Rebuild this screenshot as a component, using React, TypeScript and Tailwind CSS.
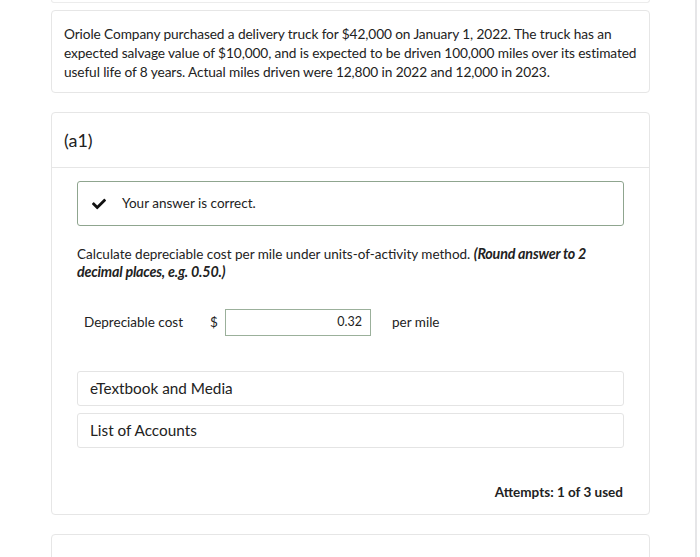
import React from "react";
import { FaCheck } from "react-icons/fa";

export default function App() {
  return (
    <div
      className="relative w-[700px] h-[557px] overflow-hidden bg-white text-[#222]"
      style={{ fontFamily: "Lato, 'Noto Sans', sans-serif" }}
    >
      <div className="absolute right-[3px] top-0 h-full w-[2px] bg-[#e6e6e8]" />

      <div className="ml-[51px] w-[599px]">
        {/* tail of previous card */}
        <div className="h-[3px] border border-t-0 border-[#ececec] rounded-b-[3px]" />

        {/* problem statement */}
        <div className="mt-[7px] border border-[#e6e6e6] rounded-[4px] px-[12px] pt-[13px] pb-[11px] text-[13.7px] leading-[19px] tracking-[-0.1px]">
          Oriole Company purchased a delivery truck for $42,000 on January 1, 2022. The truck has an expected salvage value of
          $10,000, and is expected to be driven 100,000 miles over its estimated useful life of 8 years. Actual miles driven were
          12,800 in 2022 and 12,000 in 2023.
        </div>

        {/* part a1 */}
        <div className="mt-[19px] h-[403px] border border-[#e6e6e6] rounded-[4px]">
          <div className="h-[55px] border-b border-[#e6e6e6] flex items-center px-[12px] text-[18px]">(a1)</div>

          <div className="px-[25px]">
            <div className="mt-[13px] h-[45px] border border-[#8fa58f] rounded-[3px] flex items-center pl-[14px]">
              <FaCheck className="w-[14px] h-[14px] text-[#111]" />
              <span className="ml-[16px] text-[13.5px]">Your answer is correct.</span>
            </div>

            <p className="mt-[19px] text-[13.5px] leading-[18px]">
              Calculate depreciable cost per mile under units-of-activity method.{" "}
              <span className="font-bold italic text-[14.3px] tracking-[-0.2px]">(Round answer to 2 decimal places, e.g. 0.50.)</span>
            </p>

            <div className="mt-[28px] flex items-center text-[13.5px]">
              <span className="ml-[7px] w-[126px]">Depreciable cost</span>
              <span className="w-[15px]">$</span>
              <div className="w-[146px] h-[27px] border border-[#9bb09b] flex items-center justify-end pr-[8px] text-[12.5px]">
                0.32
              </div>
              <span className="ml-[21px]">per mile</span>
            </div>

            <div className="mt-[35px] h-[35px] border border-[#e4e4e4] rounded-[3px] flex items-center pl-[12px] text-[15.3px]">
              eTextbook and Media
            </div>
            <div className="mt-[7px] h-[35px] border border-[#e4e4e4] rounded-[3px] flex items-center pl-[12px] text-[15.3px]">
              List of Accounts
            </div>

            <div className="mt-[34px] text-right pr-[1px] text-[13.5px] font-bold">Attempts: 1 of 3 used</div>
          </div>
        </div>

        {/* next card */}
        <div className="mt-[19px] h-[40px] border border-[#e6e6e6] rounded-[4px]" />
      </div>
    </div>
  );
}
